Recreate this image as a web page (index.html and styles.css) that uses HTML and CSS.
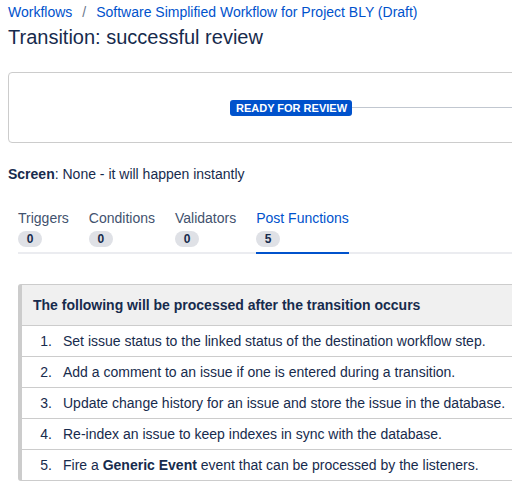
FILE: index.html
```html
<!DOCTYPE html>
<html lang="en">
<head>
    <meta charset="UTF-8">
    <meta name="viewport" content="width=device-width, initial-scale=1.0">
    <title>Transition: successful review</title>
    <link rel="stylesheet" href="styles.css">
</head>
<body>
    <div class="page">
        <nav class="breadcrumbs">
            <a href="#">Workflows</a>
            <span class="sep">/</span>
            <a href="#">Software Simplified Workflow for Project BLY (Draft)</a>
        </nav>
        <h1>Transition: successful review</h1>

        <div class="diagram">
            <div class="diagram-side"></div>
            <span class="status">Ready for review</span>
            <div class="diagram-side diagram-line"></div>
        </div>

        <p class="screen"><strong>Screen</strong>: None - it will happen instantly</p>

        <div class="details">
            <div class="tabs">
                <div class="tab">
                    <span class="tab-label">Triggers</span>
                    <span class="count">0</span>
                </div>
                <div class="tab">
                    <span class="tab-label">Conditions</span>
                    <span class="count">0</span>
                </div>
                <div class="tab">
                    <span class="tab-label">Validators</span>
                    <span class="count">0</span>
                </div>
                <div class="tab active">
                    <span class="tab-label">Post Functions</span>
                    <span class="count">5</span>
                </div>
            </div>

            <div class="functions">
                <div class="functions-head">The following will be processed after the transition occurs</div>
                <ol class="steps">
                    <li>Set issue status to the linked status of the destination workflow step.</li>
                    <li>Add a comment to an issue if one is entered during a transition.</li>
                    <li>Update change history for an issue and store the issue in the database.</li>
                    <li>Re-index an issue to keep indexes in sync with the database.</li>
                    <li>Fire a <strong>Generic Event</strong> event that can be processed by the listeners.</li>
                </ol>
            </div>
        </div>
    </div>
</body>
</html>
```

FILE: styles.css
```css
html {
    overflow: hidden;
}

body {
    margin: 0;
    font-family: 'Liberation Sans', Arial, sans-serif;
    font-size: 14px;
    line-height: 20px;
    color: #172b4d;
    background-color: #fff;
}

.page {
    width: 566px;
    padding: 2px 8px 0;
}

.breadcrumbs {
    display: flex;
    height: 20px;
}

.breadcrumbs a {
    color: #0052cc;
    text-decoration: none;
}

.sep {
    color: #6b778c;
    padding: 0 10px;
}

h1 {
    margin: 3px 0 0;
    font-size: 20px;
    font-weight: normal;
    line-height: 24px;
}

.diagram {
    display: flex;
    align-items: center;
    height: 69px;
    margin-top: 23px;
    border: 1px solid #ccc;
    border-radius: 4px;
}

.diagram-side {
    flex: 1;
}

.diagram-line {
    height: 1px;
    background-color: #c1c7d0;
}

.status {
    padding: 0 5px 0 6px;
    height: 16px;
    line-height: 16px;
    font-size: 11px;
    font-weight: bold;
    text-transform: uppercase;
    color: #fff;
    background-color: #0052cc;
    border-radius: 3px;
}

.screen {
    margin: 21px 0 0;
}

.details {
    margin: 0 10px;
}

.tabs {
    display: flex;
    gap: 20px;
    margin-top: 24px;
    box-shadow: inset 0 -2px 0 #ebecf0;
}

.tab {
    display: flex;
    flex-direction: column;
    align-items: flex-start;
    padding-bottom: 5px;
    border-bottom: 2px solid transparent;
    color: #42526e;
}

.tab.active {
    color: #0052cc;
    border-bottom-color: #0052cc;
}

.count {
    min-width: 24px;
    height: 16px;
    margin-top: 3px;
    line-height: 16px;
    font-size: 12px;
    font-weight: bold;
    text-align: center;
    color: #172b4d;
    background-color: #dfe1e6;
    border-radius: 8px;
}

.functions {
    margin-top: 30px;
    border: 1px solid #ccc;
    border-left: 4px solid #ccc;
    border-radius: 3px 0 0 3px;
}

.functions-head {
    height: 40px;
    line-height: 40px;
    padding-left: 11px;
    font-weight: bold;
    background-color: #f0f0f0;
}

.steps {
    margin: 0;
    padding: 0;
    list-style: none;
    counter-reset: step;
}

.steps li {
    height: 30px;
    line-height: 30px;
    white-space: nowrap;
    border-top: 1px solid #ccc;
    counter-increment: step;
}

.steps li::before {
    content: counter(step) ".";
    display: inline-block;
    width: 30px;
    margin-right: 11px;
    text-align: right;
}
```
